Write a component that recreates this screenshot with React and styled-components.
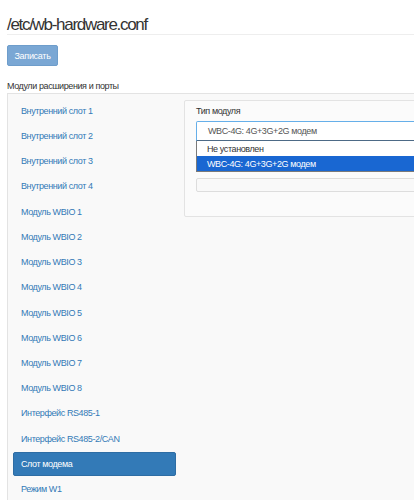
import React from "react";
import styled, { createGlobalStyle } from "styled-components";

const GlobalStyle = createGlobalStyle`
  html, body {
    margin: 0;
    padding: 0;
    overflow: hidden;
    background: #fff;
  }
  body {
    font-family: "Liberation Sans", Arial, sans-serif;
    font-size: 9px;
    letter-spacing: -0.4px;
    color: #333;
  }
`;

const Page = styled.div`
  width: 520px;
  padding-left: 7px;
`;

const Title = styled.h1`
  margin: 0;
  padding-top: 16px;
  font-size: 17px;
  line-height: 18px;
  font-weight: 400;
  letter-spacing: -1.3px;
  color: #333;
  border-bottom: 1px solid #eee;
`;

const SaveButton = styled.button`
  display: block;
  margin-top: 10px;
  width: 51px;
  height: 21px;
  padding: 0;
  font-family: inherit;
  font-size: 9px;
  letter-spacing: -0.3px;
  color: #fff;
  background: #7aa7d4;
  border: 1px solid #6e9dcb;
  border-radius: 2px;
`;

const SectionLabel = styled.div`
  margin-top: 14px;
  line-height: 12px;
  color: #333;
`;

const Well = styled.div`
  display: flex;
  align-items: flex-start;
  gap: 8px;
  margin-top: 1px;
  padding: 5px;
  background: #f9f9f9;
  border: 1px solid #e3e3e3;
  min-height: 420px;
`;

const Nav = styled.ul`
  list-style: none;
  margin: 0;
  padding: 0;
  width: 163px;
  flex: none;
`;

const NavItem = styled.li`
  box-sizing: border-box;
  display: flex;
  align-items: center;
  height: 23.3px;
  margin-bottom: 1.95px;
  padding-left: 7px;
  border-radius: 2px;
  color: ${(p) => (p.active ? "#fff" : "#337ab7")};
  background: ${(p) => (p.active ? "#337ab7" : "transparent")};
  border: 1px solid ${(p) => (p.active ? "#2e6da4" : "transparent")};
`;

const Panel = styled.div`
  flex: 1;
  margin-top: 1px;
  padding: 4px 11px 24px;
  background: #fbfbfb;
  border: 1px solid #e3e3e3;
  border-radius: 2px;
`;

const FieldLabel = styled.div`
  line-height: 12px;
  margin-bottom: 4px;
  color: #333;
`;

const SelectWrap = styled.div`
  position: relative;
`;

const SelectBox = styled.div`
  box-sizing: border-box;
  display: flex;
  align-items: center;
  height: 20px;
  padding-left: 11px;
  color: #555;
  background: #fff;
  border: 1px solid #66afe9;
  border-bottom-color: #4d6a86;
  border-radius: 2px 2px 0 0;
`;

const Dropdown = styled.div`
  position: absolute;
  top: 100%;
  left: 0;
  right: 0;
  background: #fff;
  border: 1px solid #7a7a7a;
  border-top: none;
  z-index: 2;
`;

const Option = styled.div`
  display: flex;
  align-items: center;
  height: 15px;
  padding-left: 10px;
  color: ${(p) => (p.selected ? "#fff" : "#333")};
  background: ${(p) => (p.selected ? "#1967d2" : "#fff")};
`;

const EmptyBox = styled.div`
  margin-top: 37px;
  height: 12px;
  background: #f9f9f9;
  border: 1px solid #ddd;
  border-radius: 2px;
`;

const items = [
  "Внутренний слот 1",
  "Внутренний слот 2",
  "Внутренний слот 3",
  "Внутренний слот 4",
  "Модуль WBIO 1",
  "Модуль WBIO 2",
  "Модуль WBIO 3",
  "Модуль WBIO 4",
  "Модуль WBIO 5",
  "Модуль WBIO 6",
  "Модуль WBIO 7",
  "Модуль WBIO 8",
  "Интерфейс RS485-1",
  "Интерфейс RS485-2/CAN",
  "Слот модема",
  "Режим W1",
];

export default function App() {
  return (
    <Page>
      <GlobalStyle />
      <Title>/etc/wb-hardware.conf</Title>
      <SaveButton type="button">Записать</SaveButton>
      <SectionLabel>Модули расширения и порты</SectionLabel>
      <Well>
        <Nav>
          {items.map((name) => (
            <NavItem key={name} active={name === "Слот модема"}>
              {name}
            </NavItem>
          ))}
        </Nav>
        <Panel>
          <FieldLabel>Тип модуля</FieldLabel>
          <SelectWrap>
            <SelectBox>WBC-4G: 4G+3G+2G модем</SelectBox>
            <Dropdown>
              <Option>Не установлен</Option>
              <Option selected>WBC-4G: 4G+3G+2G модем</Option>
            </Dropdown>
          </SelectWrap>
          <EmptyBox />
        </Panel>
      </Well>
    </Page>
  );
}
